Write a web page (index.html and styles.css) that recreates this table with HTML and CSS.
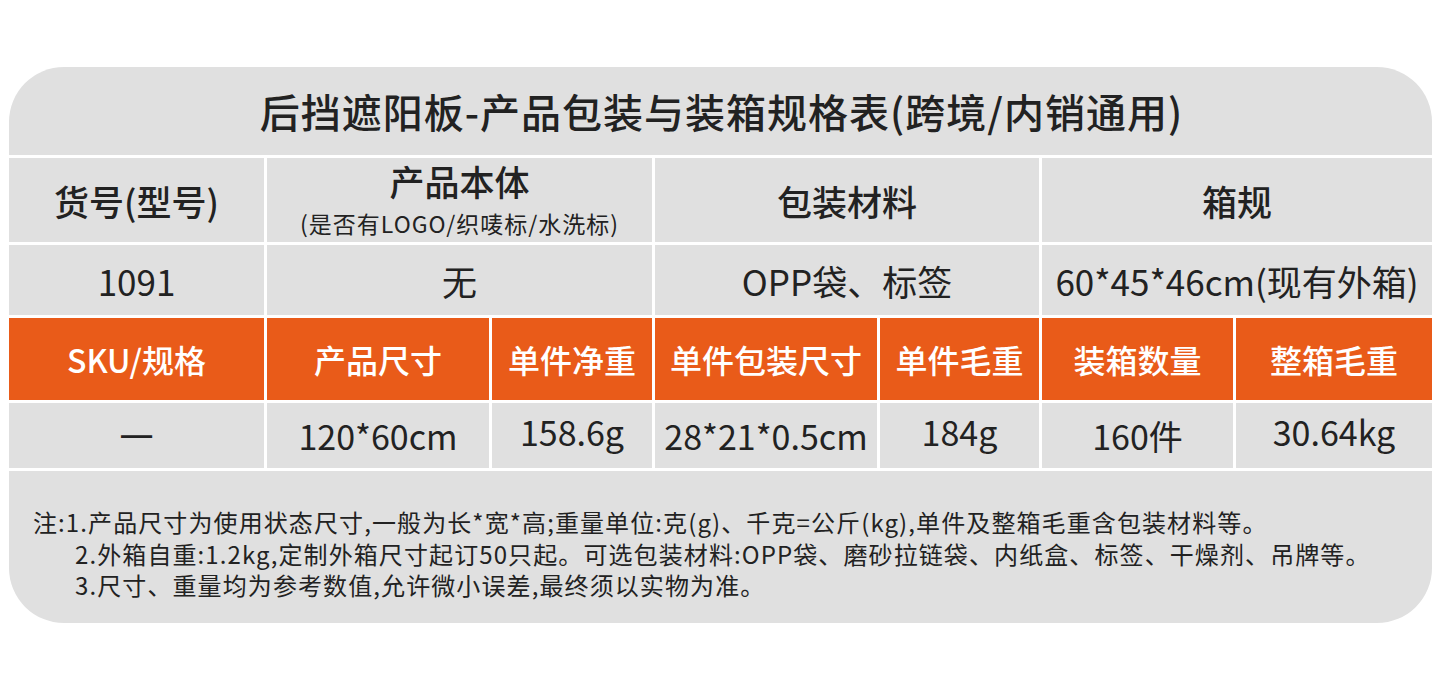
FILE: index.html
```html
<!DOCTYPE html>
<html lang="zh-CN">
<head>
<meta charset="utf-8">
<title>后挡遮阳板-产品包装与装箱规格表</title>
<link rel="stylesheet" href="styles.css">
</head>
<body>
<div class="card">
  <div class="cell title span7">后挡遮阳板-产品包装与装箱规格表(跨境/内销通用)</div>

  <div class="cell head">货号(型号)</div>
  <div class="cell head span2 stack"><span class="main">产品本体</span><span class="sub">(是否有LOGO/织唛标/水洗标)</span></div>
  <div class="cell head span2">包装材料</div>
  <div class="cell head span2">箱规</div>

  <div class="cell data">1091</div>
  <div class="cell data span2">无</div>
  <div class="cell data span2">OPP袋、标签</div>
  <div class="cell data span2">60*45*46cm(现有外箱)</div>

  <div class="cell orange">SKU/规格</div>
  <div class="cell orange">产品尺寸</div>
  <div class="cell orange">单件净重</div>
  <div class="cell orange">单件包装尺寸</div>
  <div class="cell orange">单件毛重</div>
  <div class="cell orange">装箱数量</div>
  <div class="cell orange">整箱毛重</div>

  <div class="cell val">一</div>
  <div class="cell val">120*60cm</div>
  <div class="cell val up">158.6g</div>
  <div class="cell val">28*21*0.5cm</div>
  <div class="cell val up">184g</div>
  <div class="cell val">160件</div>
  <div class="cell val up">30.64kg</div>

  <div class="cell notes span7">
    <p>注:1.产品尺寸为使用状态尺寸,一般为长*宽*高;重量单位:克(g)、千克=公斤(kg),单件及整箱毛重含包装材料等。</p>
    <p class="indent">2.外箱自重:1.2kg,定制外箱尺寸起订50只起。可选包装材料:OPP袋、磨砂拉链袋、内纸盒、标签、干燥剂、吊牌等。</p>
    <p class="indent">3.尺寸、重量均为参考数值,允许微小误差,最终须以实物为准。</p>
  </div>
</div>
</body>
</html>
```
FILE: styles.css
```css
html, body {
  margin: 0;
  padding: 0;
  background: #ffffff;
}

body {
  font-family: "Noto Sans CJK SC", "Noto Sans", sans-serif;
  color: #222222;
}

.card {
  margin: 67px 0 0 9px;
  width: 1423px;
  height: 556px;
  display: grid;
  grid-template-columns: 255px 222px 160px 222px 159px 191px 196px;
  grid-template-rows: 88px 84px 70px 82px 65px 1fr;
  gap: 3px;
  background: #ffffff;
  border-radius: 55px;
  overflow: hidden;
}

.cell {
  background: #e0e0e0;
  display: flex;
  align-items: center;
  justify-content: center;
  text-align: center;
  white-space: nowrap;
}

.span2 { grid-column: span 2; }
.span7 { grid-column: span 7; }

.title {
  font-size: 40px;
  font-weight: 500;
  letter-spacing: 1px;
  padding-left: 2px;
}

.head {
  font-size: 35px;
  font-weight: 500;
}

.stack {
  flex-direction: column;
  line-height: normal;
  padding-bottom: 6px;
}

.stack .main {
  font-size: 35px;
}

.stack .sub {
  font-size: 23px;
  font-weight: 400;
  letter-spacing: 1px;
}

.data {
  font-size: 35px;
  font-weight: 400;
}

.orange {
  background: #e95b19;
  color: #ffffff;
  font-size: 32px;
  font-weight: 500;
}

.val {
  font-size: 34px;
  font-weight: 400;
}

.val.up {
  padding-bottom: 8px;
}

.notes {
  display: block;
  text-align: left;
  padding: 35px 0 0 24px;
  font-size: 24px;
  letter-spacing: 1.1px;
  line-height: 31.5px;
}

.notes p {
  margin: 0;
}

.notes .indent {
  padding-left: 42px;
}
```
